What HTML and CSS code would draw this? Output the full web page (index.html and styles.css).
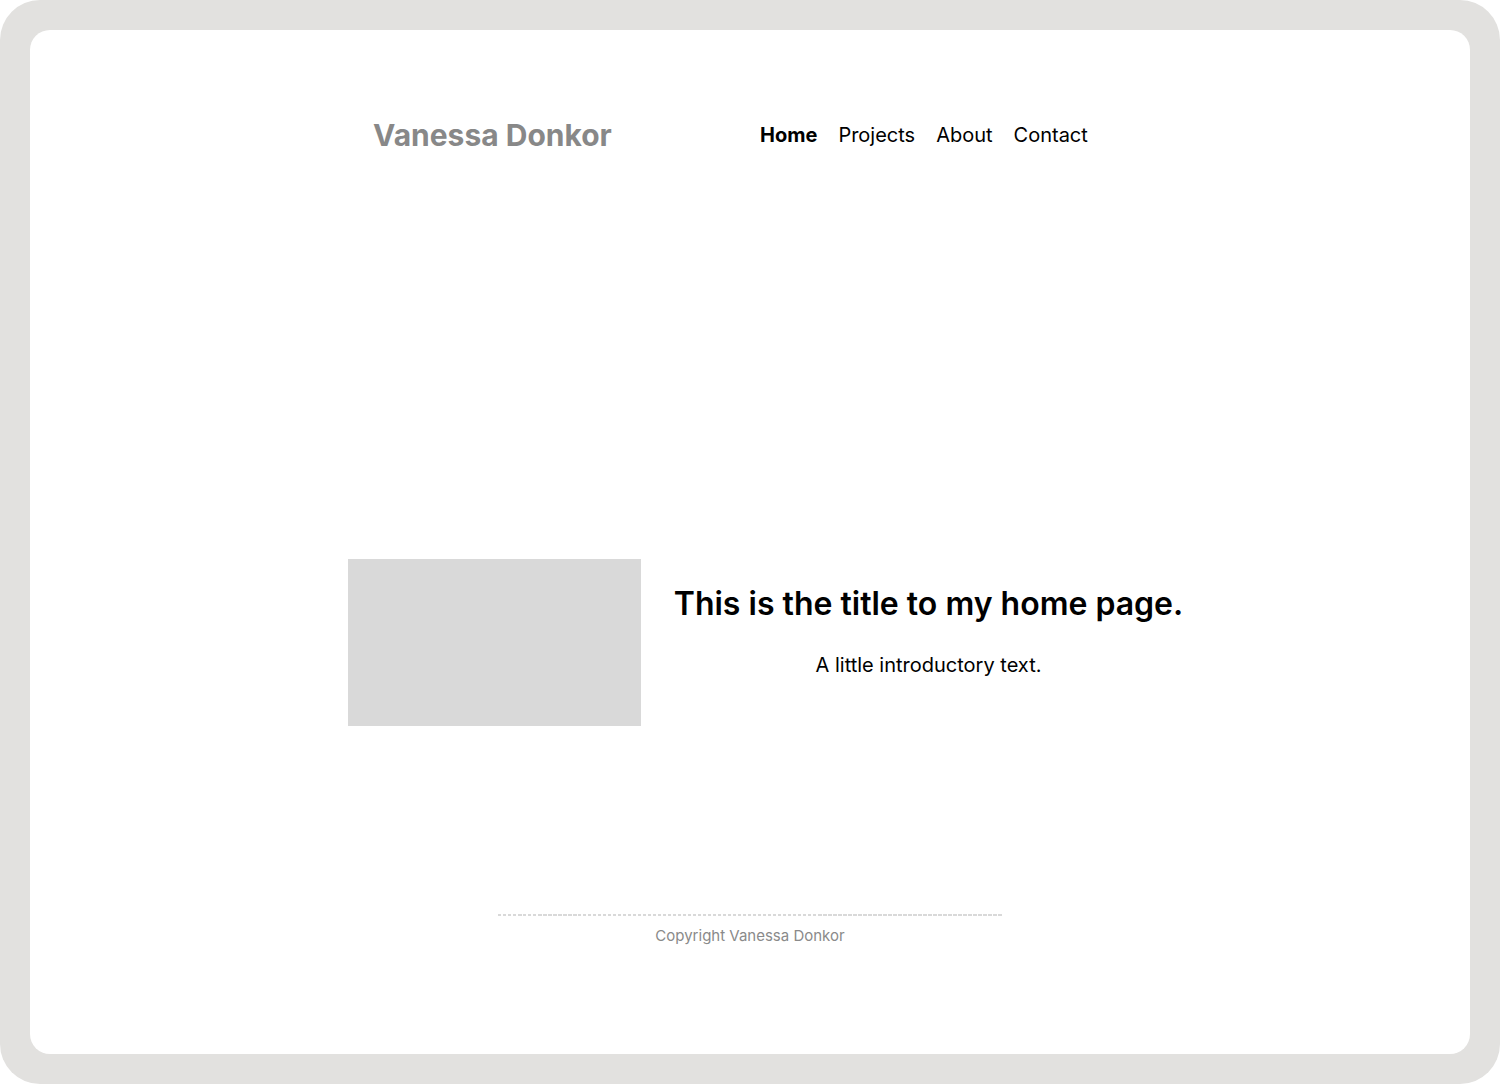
FILE: index.html
```html
<!DOCTYPE html>
<html lang="en">
<head>
<meta charset="utf-8">
<title>Vanessa Donkor</title>
<link rel="stylesheet" href="styles.css">
</head>
<body>
<div class="frame">
  <div class="card">
    <header class="site-header">
      <div class="logo">Vanessa Donkor</div>
      <nav class="nav">
        <a class="nav-link active" href="#">Home</a>
        <a class="nav-link" href="#">Projects</a>
        <a class="nav-link" href="#">About</a>
        <a class="nav-link" href="#">Contact</a>
      </nav>
    </header>
    <main class="hero">
      <div class="hero-image"></div>
      <div class="hero-text">
        <h1 class="hero-title">This is the title to my home page.</h1>
        <p class="hero-intro">A little introductory text.</p>
      </div>
    </main>
    <footer class="site-footer">
      <div class="footer-rule"></div>
      <p class="copyright">Copyright Vanessa Donkor</p>
    </footer>
  </div>
</div>
</body>
</html>
```

FILE: styles.css
```css
* { box-sizing: border-box; }

html, body {
  margin: 0;
  padding: 0;
  background: #ffffff;
}

body {
  font-family: Inter, "Noto Sans", sans-serif;
  color: #000;
}

.frame {
  width: 1500px;
  height: 1084px;
  padding: 30px;
  background: #e2e1df;
  border-radius: 40px;
}

.card {
  height: 100%;
  background: #ffffff;
  border-radius: 20px;
  display: flex;
  flex-direction: column;
}

.site-header {
  display: flex;
  align-items: flex-start;
  padding-top: 87px;
  padding-left: 343px;
}

.logo {
  width: 387px;
  font-size: 30px;
  line-height: 36px;
  font-weight: 700;
  color: #888888;
}

.nav {
  display: flex;
  gap: 21px;
  margin-top: 6px;
}

.nav-link {
  font-size: 20px;
  line-height: 24px;
  color: #000;
  text-decoration: none;
  font-weight: 400;
}

.nav-link.active {
  font-weight: 700;
}

.hero {
  display: flex;
  align-items: flex-start;
  margin-top: 406px;
  padding-left: 318px;
}

.hero-image {
  width: 293px;
  height: 167px;
  background: #d9d9d9;
  flex: none;
}

.hero-text {
  width: 575px;
  padding-top: 25px;
  text-align: center;
}

.hero-title {
  margin: 0;
  font-size: 32px;
  line-height: 40px;
  font-weight: 600;
  white-space: nowrap;
}

.hero-intro {
  margin: 29px 0 0;
  font-size: 20px;
  line-height: 24px;
  font-weight: 400;
}

.site-footer {
  margin-top: 188px;
  display: flex;
  flex-direction: column;
  align-items: center;
}

.footer-rule {
  width: 504px;
  height: 2px;
  background: repeating-linear-gradient(90deg, #d9d9d9 0 3.5px, transparent 3.5px 5px);
}

.copyright {
  margin: 11px 0 0;
  font-size: 15px;
  line-height: 18px;
  color: #8a8a8a;
}
```
